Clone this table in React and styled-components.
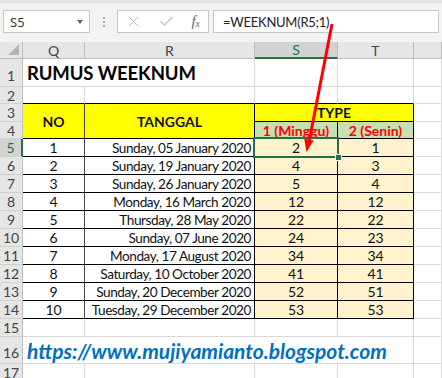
import React from "react";
import styled, { createGlobalStyle } from "styled-components";
import { X, Check } from "lucide-react";

const GlobalStyle = createGlobalStyle`
  body {
    margin: 0;
    background: #fff;
    font-family: Lato, "Liberation Sans", sans-serif;
  }
`;

const Page = styled.div`
  position: relative;
  width: 442px;
  height: 378px;
  overflow: hidden;
`;

const FormulaBar = styled.div`
  height: 42px;
  box-sizing: border-box;
  display: flex;
  align-items: flex-start;
  padding: 7px 0 0 3px;
  background: #f3f3f3;
  border-top: 3px solid #e4e4e4;
`;

const Box = styled.div`
  height: 23px;
  box-sizing: border-box;
  background: #fff;
  border: 1px solid #c8c8c8;
  display: flex;
  align-items: center;
`;

const NameBox = styled(Box)`
  width: 87px;
  padding: 0 6px 0 6px;
  justify-content: space-between;
  font-family: "Noto Sans", sans-serif;
  font-size: 13px;
  color: #333;
`;

const Caret = styled.span`
  width: 0;
  height: 0;
  border-left: 3.5px solid transparent;
  border-right: 3.5px solid transparent;
  border-top: 4px solid #666;
`;

const Grip = styled.div`
  width: 27px;
  height: 23px;
  display: flex;
  flex-direction: column;
  align-items: center;
  justify-content: center;
  gap: 2px;

  span {
    width: 2px;
    height: 2px;
    background: #a8a8a8;
  }
`;

const FxButtons = styled(Box)`
  width: 92px;
  margin-right: 4px;
  padding: 0 6px 0 7px;
  justify-content: space-between;
  color: #bdbdbd;
`;

const Fx = styled.span`
  font-family: "Liberation Serif", serif;
  font-style: italic;
  font-size: 15px;
  color: #666;
  margin-right: 2px;

  sub {
    font-size: 10px;
    vertical-align: -1px;
  }
`;

const FormulaInput = styled(Box)`
  flex: 1;
  margin-right: 3px;
  padding-left: 9px;
  font-size: 13px;
  letter-spacing: -0.25px;
  color: #222;
`;

const Sheet = styled.div`
  display: grid;
  grid-template-columns: 23px 62px 170px 83px 76px 1fr;
  grid-template-rows: 17px 28px 17px 18px 17px repeat(11, 18px) 27px 20px;
`;

const Cell = styled.div`
  position: relative;
  box-sizing: border-box;
  grid-column: ${(p) => p.$col} / span ${(p) => p.$cs || 1};
  grid-row: ${(p) => p.$row} / span ${(p) => p.$rs || 1};
  display: flex;
  align-items: center;
  justify-content: ${(p) => p.$align || "center"};
  padding: 0 3px;
  background: ${(p) => p.$bg || "#fff"};
  border-right: 1px solid ${(p) => p.$rb || "#dadada"};
  border-bottom: 1px solid ${(p) => p.$bb || "#dadada"};
  font-size: ${(p) => (p.$tight ? "13.6px" : "14px")};
  letter-spacing: ${(p) => (p.$tight ? "-0.45px" : "0")};
  font-weight: ${(p) => (p.$bold ? 700 : 400)};
  color: ${(p) => p.$color || "#111"};
  white-space: nowrap;
`;

const ColHead = styled.div`
  box-sizing: border-box;
  display: flex;
  align-items: center;
  justify-content: center;
  background: ${(p) => (p.$sel ? "#d3d3d3" : "#e6e6e6")};
  color: ${(p) => (p.$sel ? "#217346" : "#444")};
  border-right: 1px solid #bdbdbd;
  border-bottom: ${(p) => (p.$sel ? "2px solid #217346" : "1px solid #bdbdbd")};
  font-size: 14px;
`;

const Corner = styled(ColHead)`
  align-items: flex-end;
  justify-content: flex-end;
  padding: 0 3px 3px 0;

  span {
    width: 0;
    height: 0;
    border-left: 11px solid transparent;
    border-bottom: 11px solid #b5b5b5;
  }
`;

const RowHead = styled.div`
  grid-column: 1;
  box-sizing: border-box;
  display: flex;
  align-items: ${(p) => (p.$low ? "flex-end" : "center")};
  justify-content: center;
  padding-bottom: ${(p) => (p.$low ? "2px" : "0")};
  background: ${(p) => (p.$sel ? "#d3d3d3" : "#e6e6e6")};
  color: ${(p) => (p.$sel ? "#217346" : "#444")};
  border-right: ${(p) => (p.$sel ? "2px solid #217346" : "1px solid #bdbdbd")};
  border-bottom: 1px solid #d0d0d0;
  font-size: 14px;
`;

const Title = styled(Cell)`
  justify-content: flex-start;
  padding-left: 4px;
  font-size: 18.5px;
  letter-spacing: -0.1px;
  font-weight: 700;
  color: #000;
`;

const Link = styled(Cell)`
  justify-content: flex-start;
  padding-left: 4px;
  font-size: 21px;
  letter-spacing: 0;
  font-weight: 700;
  font-style: italic;
  color: #0070c0;
`;

const Selection = styled.span`
  position: absolute;
  z-index: 2;
  left: -2px;
  top: -2px;
  right: -2px;
  bottom: -2px;
  border: 2px solid #217346;

  &::after {
    content: "";
    position: absolute;
    right: -5px;
    bottom: -5px;
    width: 5px;
    height: 5px;
    background: #217346;
    border: 1px solid #fff;
  }
`;

const Arrow = styled.svg`
  position: absolute;
  left: 0;
  top: 0;
  z-index: 5;
  pointer-events: none;
`;

const rows = [
  [1, "Sunday, 05 January 2020", 2, 1],
  [2, "Sunday, 19 January 2020", 4, 3],
  [3, "Sunday, 26 January 2020", 5, 4],
  [4, "Monday, 16 March 2020", 12, 12],
  [5, "Thursday, 28 May 2020", 22, 22],
  [6, "Sunday, 07 June 2020", 24, 23],
  [7, "Monday, 17 August 2020", 34, 34],
  [8, "Saturday, 10 October 2020", 41, 41],
  [9, "Sunday, 20 December 2020", 52, 51],
  [10, "Tuesday, 29 December 2020", 53, 53],
];

const BLACK = "#000";
const YELLOW = "#ffff00";
const GREEN = "#c6e0b4";
const CREAM = "#fff2cc";

export default function App() {
  const lowRows = [1, 16, 17];
  return (
    <Page>
      <GlobalStyle />
      <FormulaBar>
        <NameBox>
          <span>S5</span>
          <Caret />
        </NameBox>
        <Grip>
          <span />
          <span />
          <span />
        </Grip>
        <FxButtons>
          <X size={17} strokeWidth={1.4} />
          <Check size={17} strokeWidth={1.6} />
          <Fx>
            f<sub>x</sub>
          </Fx>
        </FxButtons>
        <FormulaInput>=WEEKNUM(R5;1)</FormulaInput>
      </FormulaBar>

      <Sheet>
        <Corner>
          <span />
        </Corner>
        <ColHead>Q</ColHead>
        <ColHead>R</ColHead>
        <ColHead $sel>S</ColHead>
        <ColHead>T</ColHead>
        <ColHead />

        {Array.from({ length: 17 }, (_, i) => (
          <RowHead
            key={i}
            style={{ gridRow: i + 2 }}
            $sel={i + 1 === 5}
            $low={lowRows.includes(i + 1)}
          >
            {i + 1}
          </RowHead>
        ))}

        {/* row 1 */}
        <Title $col={2} $row={2} $cs={2}>RUMUS WEEKNUM</Title>
        <Cell $col={4} $row={2} />
        <Cell $col={5} $row={2} />
        <Cell $col={6} $row={2} />

        {/* row 2 */}
        <Cell $col={2} $row={3} $bb={BLACK} />
        <Cell $col={3} $row={3} $bb={BLACK} />
        <Cell $col={4} $row={3} $bb={BLACK} />
        <Cell $col={5} $row={3} $bb={BLACK} />
        <Cell $col={6} $row={3} />

        {/* rows 3-4: header */}
        <Cell $col={2} $row={4} $rs={2} $bg={YELLOW} $bold $rb="#444" $bb={BLACK}>
          NO
        </Cell>
        <Cell $col={3} $row={4} $rs={2} $bg={YELLOW} $bold $rb={BLACK} $bb={BLACK}>
          TANGGAL
        </Cell>
        <Cell $col={4} $row={4} $cs={2} $bg={YELLOW} $bold $rb={BLACK} $bb={BLACK}>
          TYPE
        </Cell>
        <Cell $col={6} $row={4} />
        <Cell $col={4} $row={5} $bg={GREEN} $bold $color="#ff0000" $rb={BLACK} $bb={BLACK}>
          1 (Minggu)
        </Cell>
        <Cell $col={5} $row={5} $bg={GREEN} $bold $color="#ff0000" $rb={BLACK} $bb={BLACK}>
          2 (Senin)
        </Cell>
        <Cell $col={6} $row={5} />

        {/* data rows 5-14 */}
        {rows.map(([no, date, s, t], i) => {
          const r = i + 6;
          return (
            <React.Fragment key={no}>
              <Cell $col={2} $row={r} $rb="#444" $bb={BLACK}>
                {no}
              </Cell>
              <Cell $col={3} $row={r} $align="flex-end" $tight $rb={BLACK} $bb={BLACK}>
                {date}
              </Cell>
              <Cell $col={4} $row={r} $bg={CREAM} $rb={BLACK} $bb={BLACK}>
                {s}
                {i === 0 && <Selection />}
              </Cell>
              <Cell $col={5} $row={r} $bg={CREAM} $rb={BLACK} $bb={BLACK}>
                {t}
              </Cell>
              <Cell $col={6} $row={r} />
            </React.Fragment>
          );
        })}

        {/* row 15 */}
        <Cell $col={2} $row={16} />
        <Cell $col={3} $row={16} />
        <Cell $col={4} $row={16} />
        <Cell $col={5} $row={16} />
        <Cell $col={6} $row={16} />

        {/* row 16 */}
        <Link $col={2} $row={17} $cs={4}>https://www.mujiyamianto.blogspot.com</Link>
        <Cell $col={6} $row={17} />

        {/* row 17 */}
        <Cell $col={2} $row={18} />
        <Cell $col={3} $row={18} />
        <Cell $col={4} $row={18} />
        <Cell $col={5} $row={18} />
        <Cell $col={6} $row={18} />
      </Sheet>

      <Arrow width="442" height="378" viewBox="0 0 442 378">
        <line x1="332" y1="24" x2="309" y2="142" stroke="#ff0000" strokeWidth="3" />
        <polygon points="306.5,152 313.6,140.6 304.3,138.8" fill="#ff0000" />
      </Arrow>
    </Page>
  );
}
